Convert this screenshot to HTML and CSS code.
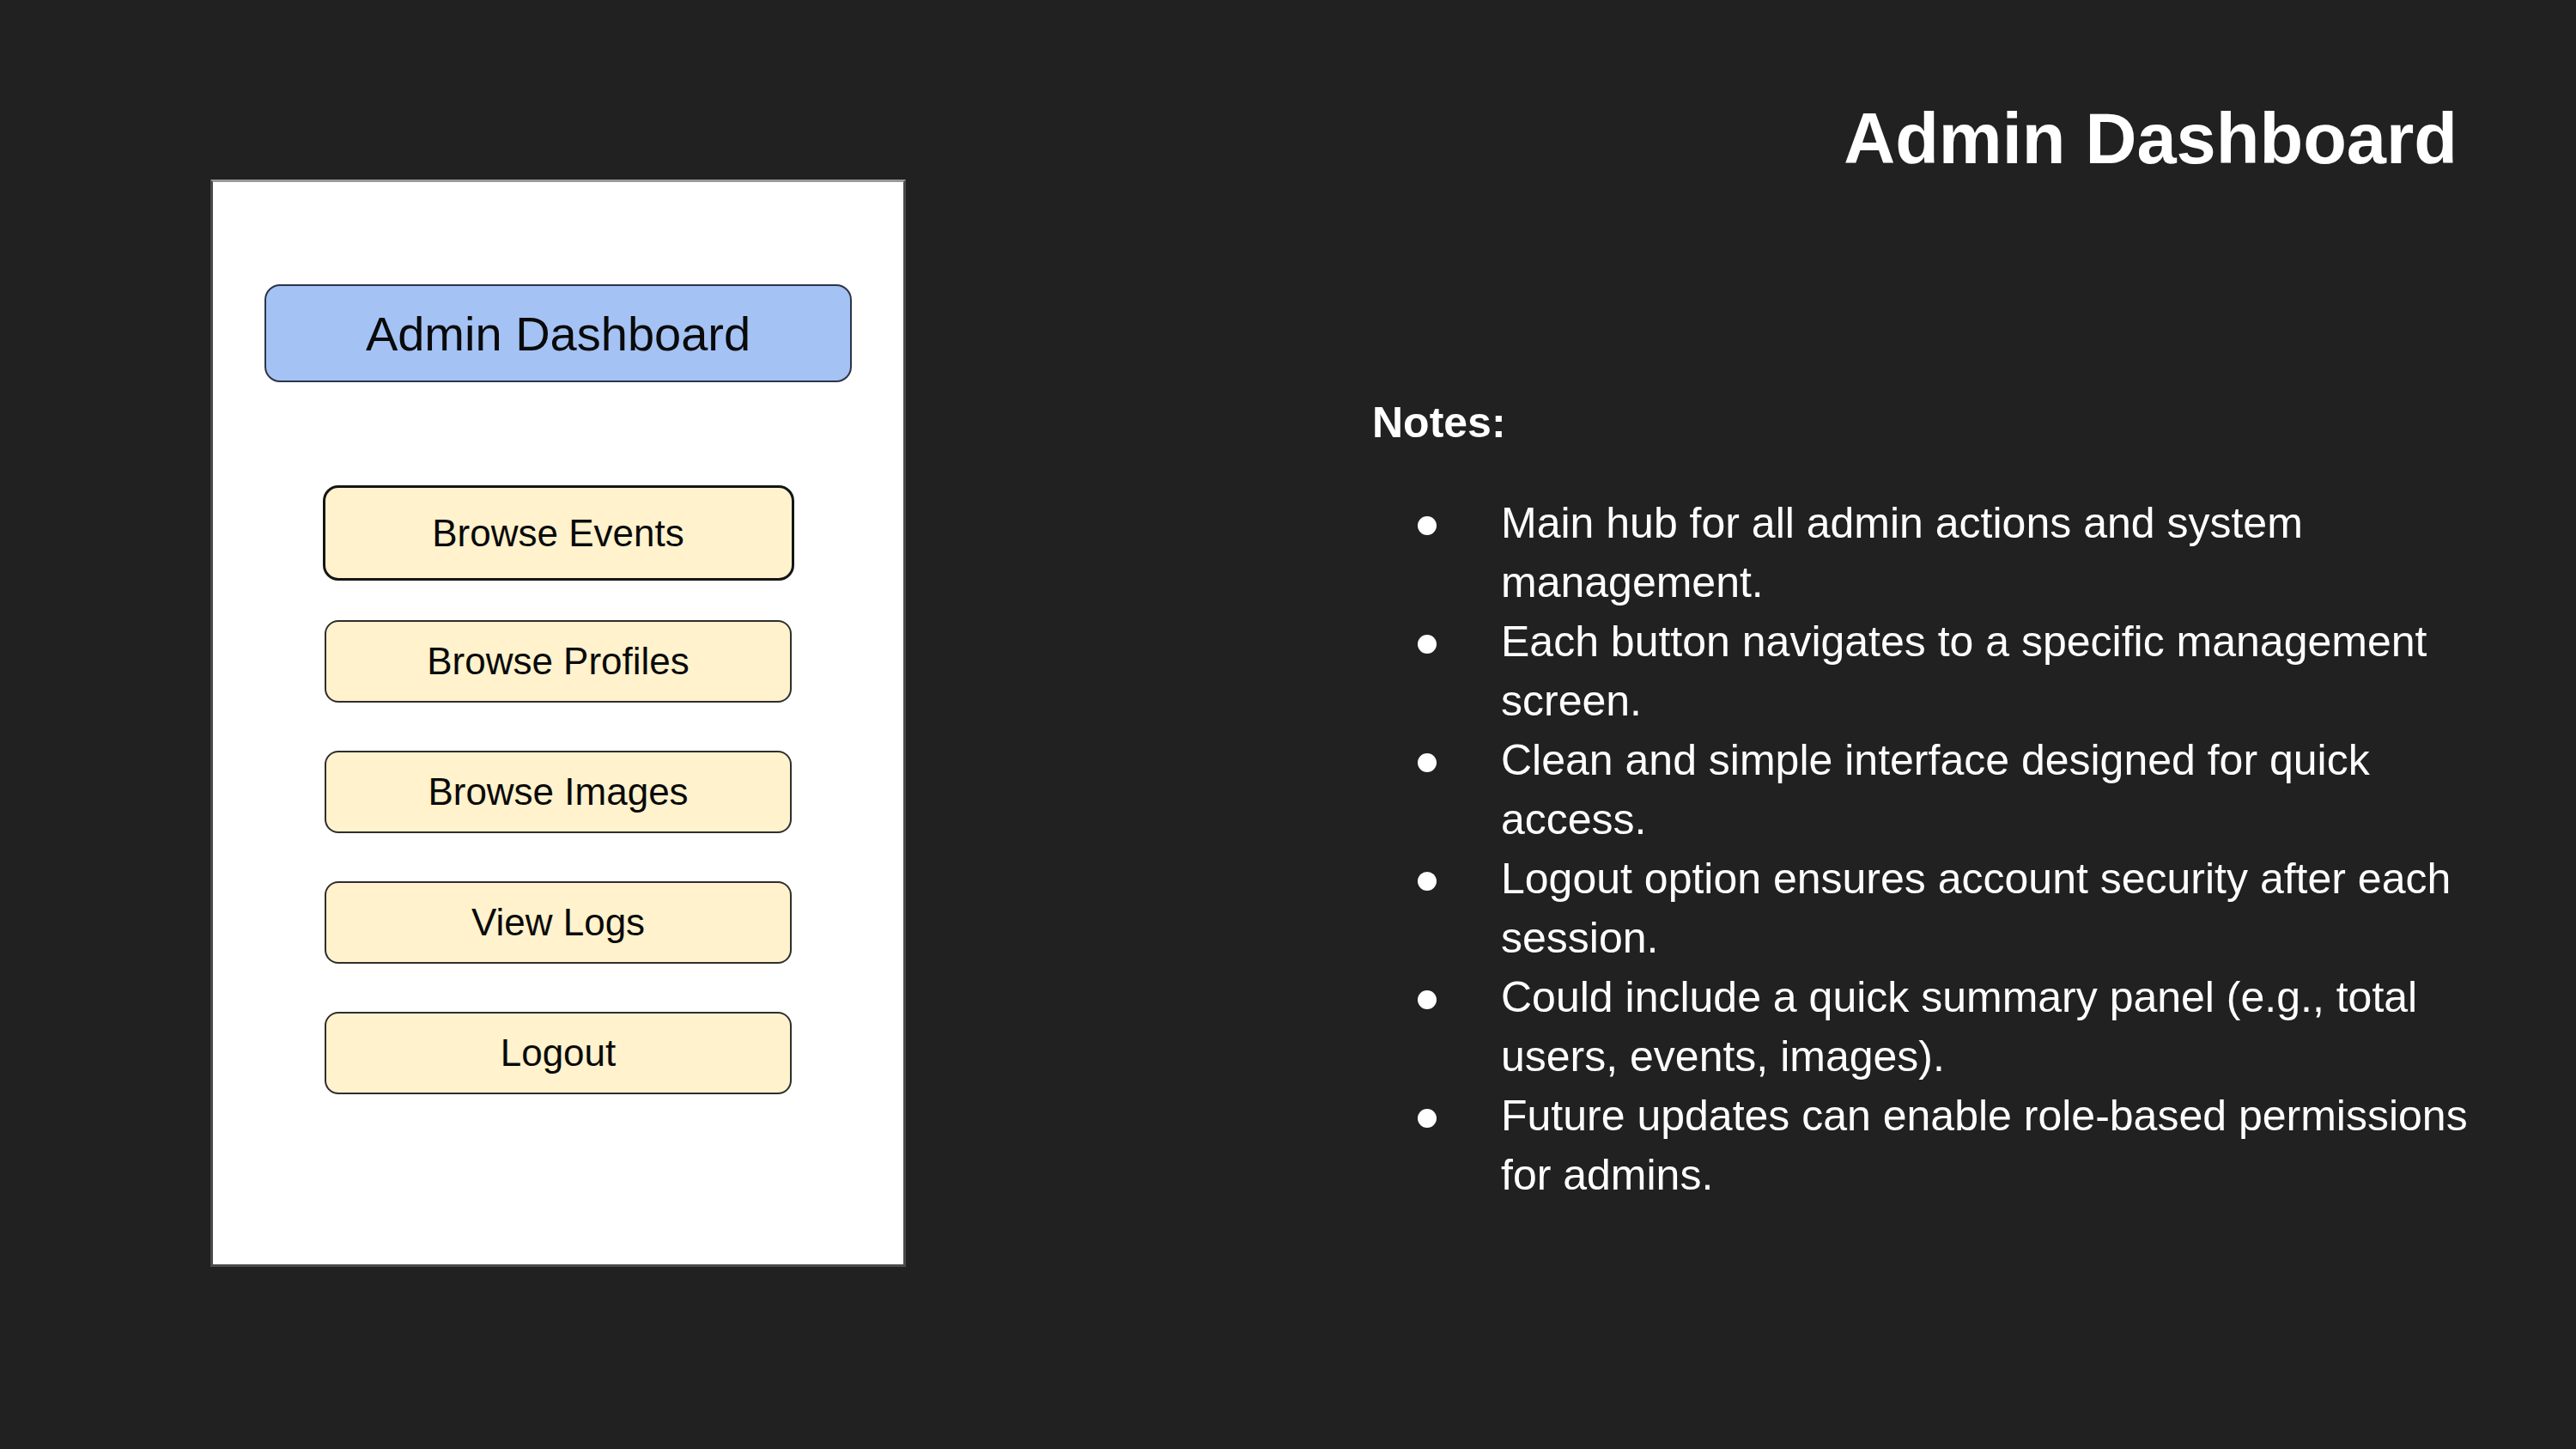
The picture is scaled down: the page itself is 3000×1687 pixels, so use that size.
FILE: index.html
```html
<!DOCTYPE html>
<html lang="en">
<head>
<meta charset="utf-8">
<title>Admin Dashboard</title>
<link rel="stylesheet" href="styles.css">
</head>
<body>
<div class="slide">
  <div class="phone">
    <div class="app-title">Admin Dashboard</div>
    <div class="btn btn-primary">Browse Events</div>
    <div class="btn">Browse Profiles</div>
    <div class="btn">Browse Images</div>
    <div class="btn">View Logs</div>
    <div class="btn">Logout</div>
  </div>
  <div class="side">
    <h1 class="title">Admin Dashboard</h1>
    <h2 class="notes-label">Notes:</h2>
    <ul class="notes">
      <li><span class="dot"></span><span class="txt">Main hub for all admin actions and system management.</span></li>
      <li><span class="dot"></span><span class="txt">Each button navigates to a specific management screen.</span></li>
      <li><span class="dot"></span><span class="txt">Clean and simple interface designed for quick access.</span></li>
      <li><span class="dot"></span><span class="txt">Logout option ensures account security after each session.</span></li>
      <li><span class="dot"></span><span class="txt">Could include a quick summary panel (e.g., total users, events, images).</span></li>
      <li><span class="dot"></span><span class="txt">Future updates can enable role-based permissions for admins.</span></li>
    </ul>
  </div>
</div>
</body>
</html>
```

FILE: styles.css
```css
html, body {
  margin: 0;
  padding: 0;
  background: #212121;
}

body {
  font-family: "Liberation Sans", Arial, Helvetica, sans-serif;
}

.slide {
  width: 3000px;
  height: 1687px;
  display: flex;
  align-items: flex-start;
  overflow: hidden;
}

.phone {
  margin-left: 245px;
  margin-top: 209px;
  width: 810px;
  height: 1266px;
  box-sizing: border-box;
  background: #ffffff;
  border: 3px solid #4a4a4a;
  border-top-color: #9a9a9a;
  display: flex;
  flex-direction: column;
  align-items: center;
  flex: none;
}

.app-title {
  margin-top: 119px;
  width: 684px;
  height: 114px;
  box-sizing: border-box;
  background: #a4c2f4;
  border: 2px solid #2c3547;
  border-radius: 18px;
  display: flex;
  align-items: center;
  justify-content: center;
  font-size: 56px;
  color: #0a0a0a;
}

.btn {
  margin-top: 56px;
  width: 544px;
  height: 96px;
  box-sizing: border-box;
  background: #fff2cc;
  border: 2px solid #2e2e2e;
  border-radius: 16px;
  display: flex;
  align-items: center;
  justify-content: center;
  font-size: 44px;
  color: #0a0a0a;
}

.btn-primary {
  margin-top: 120px;
  width: 549px;
  height: 111px;
  border: 3px solid #151515;
  border-radius: 18px;
}

.btn-primary + .btn {
  margin-top: 46px;
}

.side {
  margin-left: 543px;
  width: 1310px;
  padding-top: 120px;
  color: #ffffff;
  flex: none;
}

.title {
  margin: 0 46px 0 0;
  text-align: right;
  font-size: 83px;
  line-height: 83px;
  font-weight: bold;
}

.notes-label {
  margin: 264px 0 0 0;
  font-size: 50px;
  line-height: 50px;
  font-weight: bold;
}

.notes {
  list-style: none;
  margin: 58px 0 0 0;
  padding: 0;
  font-size: 50px;
  line-height: 69px;
}

.notes li {
  display: flex;
  align-items: flex-start;
}

.dot {
  flex: none;
  width: 22px;
  height: 22px;
  border-radius: 50%;
  background: #ffffff;
  margin: 26px 75px 0 53px;
}

.txt {
  width: 1160px;
}
```
